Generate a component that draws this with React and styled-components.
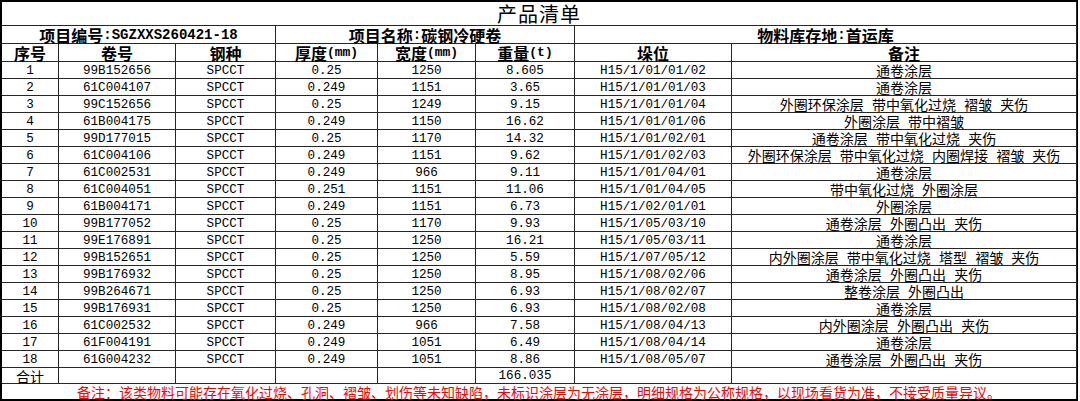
import styled, { createGlobalStyle } from "styled-components";

const GlobalStyle = createGlobalStyle`
  html, body { margin: 0; padding: 0; background: #fff; }
  body { font-family: "Noto Sans CJK SC", sans-serif; color: #000; }
`;

const rows = [
  ["1", "99B152656", "SPCCT", "0.25", "1250", "8.605", "H15/1/01/01/02", "通卷涂层"],
  ["2", "61C004107", "SPCCT", "0.249", "1151", "3.65", "H15/1/01/01/03", "通卷涂层"],
  ["3", "99C152656", "SPCCT", "0.25", "1249", "9.15", "H15/1/01/01/04", "外圈环保涂层 带中氧化过烧 褶皱 夹伤"],
  ["4", "61B004175", "SPCCT", "0.249", "1150", "16.62", "H15/1/01/01/06", "外圈涂层 带中褶皱"],
  ["5", "99D177015", "SPCCT", "0.25", "1170", "14.32", "H15/1/01/02/01", "通卷涂层 带中氧化过烧 夹伤"],
  ["6", "61C004106", "SPCCT", "0.249", "1151", "9.62", "H15/1/01/02/03", "外圈环保涂层 带中氧化过烧 内圈焊接 褶皱 夹伤"],
  ["7", "61C002531", "SPCCT", "0.249", "966", "9.11", "H15/1/01/04/01", "通卷涂层"],
  ["8", "61C004051", "SPCCT", "0.251", "1151", "11.06", "H15/1/01/04/05", "带中氧化过烧 外圈涂层"],
  ["9", "61B004171", "SPCCT", "0.249", "1151", "6.73", "H15/1/02/01/01", "外圈涂层"],
  ["10", "99B177052", "SPCCT", "0.25", "1170", "9.93", "H15/1/05/03/10", "通卷涂层 外圈凸出 夹伤"],
  ["11", "99E176891", "SPCCT", "0.25", "1250", "16.21", "H15/1/05/03/11", "通卷涂层"],
  ["12", "99B152651", "SPCCT", "0.25", "1250", "5.59", "H15/1/07/05/12", "内外圈涂层 带中氧化过烧 塔型 褶皱 夹伤"],
  ["13", "99B176932", "SPCCT", "0.25", "1250", "8.95", "H15/1/08/02/06", "通卷涂层 外圈凸出 夹伤"],
  ["14", "99B264671", "SPCCT", "0.25", "1250", "6.93", "H15/1/08/02/07", "整卷涂层 外圈凸出"],
  ["15", "99B176931", "SPCCT", "0.25", "1250", "6.93", "H15/1/08/02/08", "通卷涂层"],
  ["16", "61C002532", "SPCCT", "0.249", "966", "7.58", "H15/1/08/04/13", "内外圈涂层 外圈凸出 夹伤"],
  ["17", "61F004191", "SPCCT", "0.249", "1051", "6.49", "H15/1/08/04/14", "通卷涂层"],
  ["18", "61G004232", "SPCCT", "0.249", "1051", "8.86", "H15/1/08/05/07", "通卷涂层 外圈凸出 夹伤"],
];

// the 1px gaps show the grid colour through, like spreadsheet lines
const Sheet = styled.div`
  display: grid;
  grid-template-columns: 56px 116px 99px 101px 97px 98px 156px 344px;
  grid-template-rows: 23px 17px 17px repeat(18, 16px) 15px 15px;
  gap: 1px;
  width: 1078px;
  box-sizing: border-box;
  border: 2px solid #000;
  border-right-width: 1px;
  background: #262626;
`;

const Cell = styled.div`
  grid-column: span ${(p) => p.$span || 1};
  display: flex;
  align-items: center;
  justify-content: center;
  background: #fff;
  white-space: nowrap;
  line-height: 1;
  font-size: 14px;
  color: #000;
`;

const Title = styled(Cell)`
  font-size: 20px;
  letter-spacing: 1px;
`;

const Info = styled(Cell)`
  font-size: 16px;
  font-weight: 700;
`;

const Head = styled(Cell)`
  font-size: 16px;
  font-weight: 700;
`;

const Num = styled(Cell)`
  padding-top: 2px;
  box-sizing: border-box;
  font-family: "Liberation Mono", monospace;
  font-size: 12.6px;
`;

const Remark = styled(Cell)`
  word-spacing: 5px;
`;

const Note = styled(Cell)`
  color: #ff0000;
`;

// ASCII on the sheet is narrow and monospaced
const Latin = styled.span`
  font-family: "Liberation Mono", monospace;
  font-size: ${(p) => p.$size || 13}px;
  font-weight: inherit;
`;

export default function App() {
  return (
    <>
      <GlobalStyle />
      <Sheet>
        <Title $span={8}>产品清单</Title>

        <Info $span={3}>
          项目编号<Latin $size={14}>:SGZXXS260421-18</Latin>
        </Info>
        <Info $span={3}>
          项目名称<Latin $size={14}>:</Latin>碳钢冷硬卷
        </Info>
        <Info $span={2}>
          物料库存地<Latin $size={14}>:</Latin>首运库
        </Info>

        <Head>序号</Head>
        <Head>卷号</Head>
        <Head>钢种</Head>
        <Head>
          厚度<Latin>(mm)</Latin>
        </Head>
        <Head>
          宽度<Latin>(mm)</Latin>
        </Head>
        <Head>
          重量<Latin>(t)</Latin>
        </Head>
        <Head>垛位</Head>
        <Head>备注</Head>

        {rows.map((r) => [
          ...r.slice(0, 7).map((v, i) => <Num key={r[0] + "-" + i}>{v}</Num>),
          <Remark key={r[0] + "-r"}>{r[7]}</Remark>,
        ])}

        <Cell>合计</Cell>
        <Cell />
        <Cell />
        <Cell />
        <Cell />
        <Num>166.035</Num>
        <Cell />
        <Cell />

        <Note $span={8}>
          备注：该类物料可能存在氧化过烧、孔洞、褶皱、划伤等未知缺陷，未标识涂层为无涂层，明细规格为公称规格，以现场看货为准，不接受质量异议。
        </Note>
      </Sheet>
    </>
  );
}
